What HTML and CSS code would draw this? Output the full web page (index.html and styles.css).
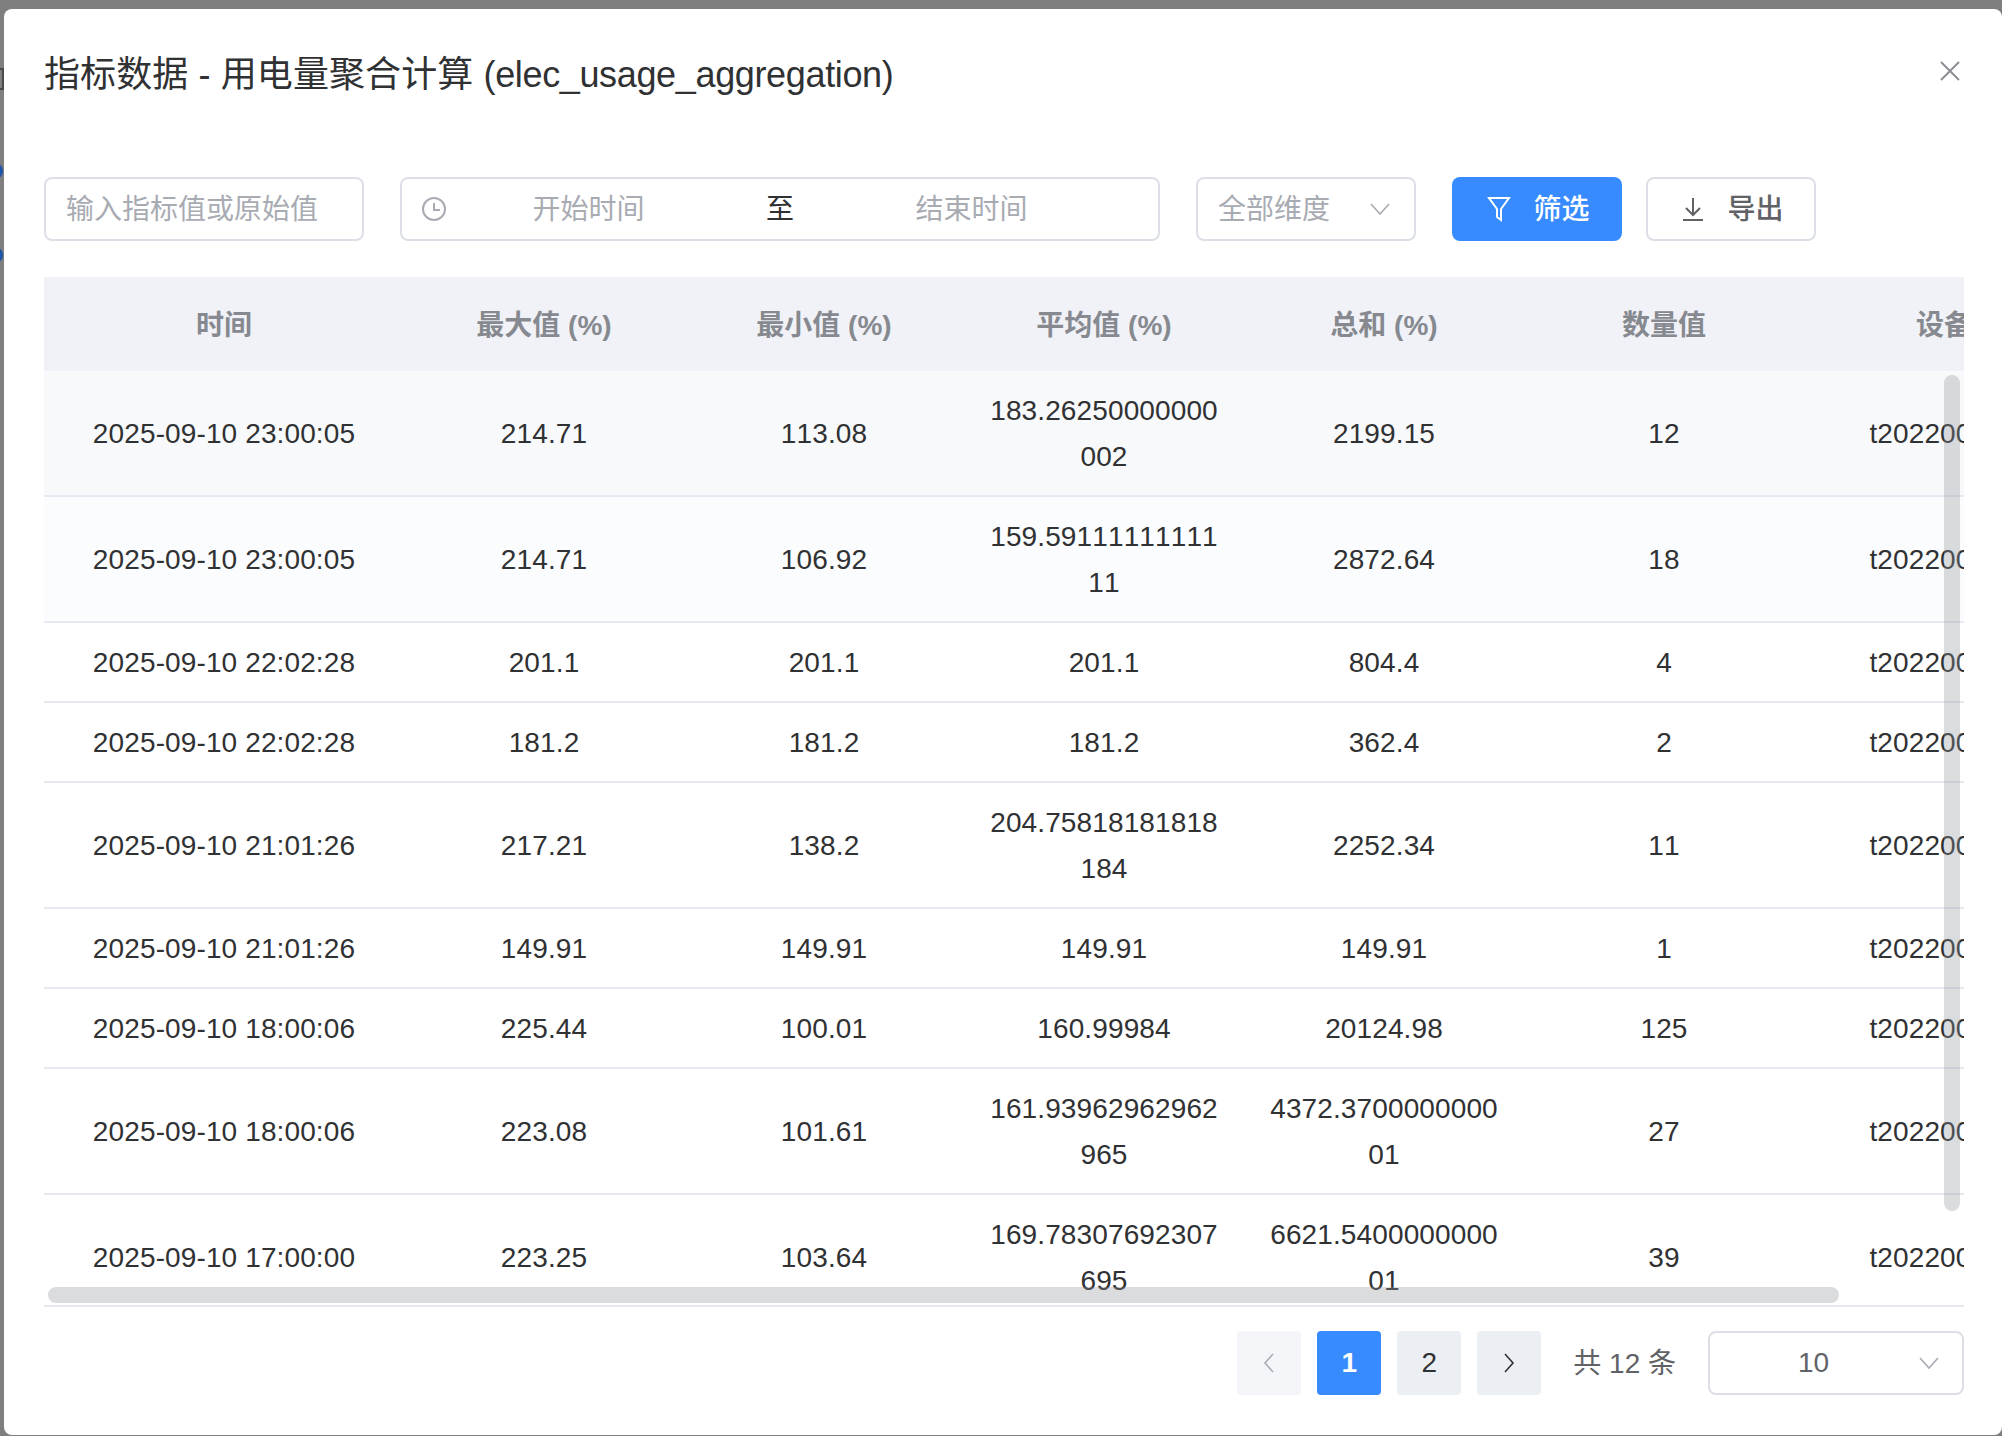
FILE: index.html
```html
<!DOCTYPE html>
<html lang="zh-CN">
<head>
    <meta charset="UTF-8">
    <meta name="viewport" content="width=device-width, initial-scale=1.0">
    <title>指标数据</title>
    <link rel="stylesheet" href="styles.css">
</head>
<body>
    <!-- page behind the dialog, only a sliver shows on the left -->
    <div class="behind-glyph"></div>
    <div class="behind-dot behind-dot-1"></div>
    <div class="behind-dot behind-dot-2"></div>

    <div class="modal">
        <div class="modal-head">
            <h1 class="modal-title">指标数据 - 用电量聚合计算 <span class="title-code">(elec_usage_aggregation)</span></h1>
            <svg class="close-icon" viewBox="0 0 20 20"><path d="M1 1l18 18M19 1L1 19"/></svg>
        </div>

        <div class="toolbar">
            <div class="field field-search"><span class="placeholder">输入指标值或原始值</span></div>

            <div class="field field-date">
                <svg class="clock-icon" viewBox="0 0 26 26"><circle cx="13" cy="13" r="11"/><path d="M13 7v7h6"/></svg>
                <span class="placeholder date-part">开始时间</span>
                <span class="date-sep">至</span>
                <span class="placeholder date-part">结束时间</span>
            </div>

            <div class="field field-select">
                <span class="placeholder select-text">全部维度</span>
                <svg class="chevron" viewBox="0 0 20 12"><path d="M1 1l9 10 9-10"/></svg>
            </div>

            <button class="btn btn-primary">
                <svg class="btn-icon" viewBox="0 0 24 28"><path d="M2 3h20l-8 11v11l-4-3v-8z"/></svg>
                <span class="btn-text">筛选</span>
            </button>
            <button class="btn btn-plain">
                <svg class="btn-icon" viewBox="0 0 24 28"><path d="M12 3v16M5 13l7 7 7-7M2 25h20"/></svg>
                <span class="btn-text">导出</span>
            </button>
        </div>

        <div class="table-wrap">
            <table class="data-table">
                <colgroup>
                    <col class="col-time">
                    <col class="col-num"><col class="col-num"><col class="col-num">
                    <col class="col-num"><col class="col-num"><col class="col-num">
                </colgroup>
                <thead>
                    <tr>
                        <th>时间</th>
                        <th>最大值 (%)</th>
                        <th>最小值 (%)</th>
                        <th>平均值 (%)</th>
                        <th>总和 (%)</th>
                        <th>数量值</th>
                        <th>设备</th>
                    </tr>
                </thead>
                <tbody>
                    <tr class="row-hover">
                        <td>2025-09-10 23:00:05</td><td>214.71</td><td>113.08</td><td>183.26250000000002</td><td>2199.15</td><td>12</td><td>t202200123</td>
                    </tr>
                    <tr class="row-soft">
                        <td>2025-09-10 23:00:05</td><td>214.71</td><td>106.92</td><td>159.5911111111111</td><td>2872.64</td><td>18</td><td>t202200123</td>
                    </tr>
                    <tr>
                        <td>2025-09-10 22:02:28</td><td>201.1</td><td>201.1</td><td>201.1</td><td>804.4</td><td>4</td><td>t202200123</td>
                    </tr>
                    <tr>
                        <td>2025-09-10 22:02:28</td><td>181.2</td><td>181.2</td><td>181.2</td><td>362.4</td><td>2</td><td>t202200123</td>
                    </tr>
                    <tr>
                        <td>2025-09-10 21:01:26</td><td>217.21</td><td>138.2</td><td>204.75818181818184</td><td>2252.34</td><td>11</td><td>t202200123</td>
                    </tr>
                    <tr>
                        <td>2025-09-10 21:01:26</td><td>149.91</td><td>149.91</td><td>149.91</td><td>149.91</td><td>1</td><td>t202200123</td>
                    </tr>
                    <tr>
                        <td>2025-09-10 18:00:06</td><td>225.44</td><td>100.01</td><td>160.99984</td><td>20124.98</td><td>125</td><td>t202200123</td>
                    </tr>
                    <tr>
                        <td>2025-09-10 18:00:06</td><td>223.08</td><td>101.61</td><td>161.93962962962965</td><td>4372.370000000001</td><td>27</td><td>t202200123</td>
                    </tr>
                    <tr>
                        <td>2025-09-10 17:00:00</td><td>223.25</td><td>103.64</td><td>169.78307692307695</td><td>6621.540000000001</td><td>39</td><td>t202200123</td>
                    </tr>
                </tbody>
            </table>
            <div class="thumb thumb-v"></div>
            <div class="thumb thumb-h"></div>
        </div>

        <div class="pager">
            <div class="page-btn page-disabled">
                <svg class="page-arrow" viewBox="0 0 12 20"><path d="M10 1L2 10l8 9"/></svg>
            </div>
            <div class="page-btn page-active">1</div>
            <div class="page-btn">2</div>
            <div class="page-btn">
                <svg class="page-arrow" viewBox="0 0 12 20"><path d="M2 1l8 9-8 9"/></svg>
            </div>
            <span class="page-total">共 12 条</span>
            <div class="field field-size">
                <span class="size-text">10</span>
                <svg class="chevron" viewBox="0 0 20 12"><path d="M1 1l9 10 9-10"/></svg>
            </div>
        </div>
    </div>
</body>
</html>
```

FILE: styles.css
```css
* {
    box-sizing: border-box;
}

html, body {
    height: 100%;
}

body {
    margin: 0;
    padding: 9px 0 0 4px;
    overflow: hidden;
    background-color: #7f7f7f;
    font-family: "Liberation Sans", "Noto Sans CJK SC", sans-serif;
    font-size: 28px;
    font-kerning: none;
    color: #303133;
}

.behind-glyph {
    position: absolute;
    left: -14px;
    top: 68px;
    width: 18px;
    height: 22px;
    border: 2px solid #4a4a4c;
}

.behind-dot {
    position: absolute;
    left: -8px;
    width: 11px;
    height: 14px;
    border-radius: 50%;
    background-color: #1f57a8;
}

.behind-dot-1 {
    top: 164px;
}

.behind-dot-2 {
    top: 248px;
}

.modal {
    position: relative;
    width: 1998px;
    height: 1426px;
    padding: 41px 38px 0 40px;
    background-color: #fff;
    border-radius: 8px;
}

.modal-head {
    display: flex;
    align-items: center;
    justify-content: space-between;
    height: 50px;
}

.modal-title {
    margin: 0;
    font-size: 36px;
    font-weight: 400;
    line-height: 50px;
    letter-spacing: 0.1px;
    color: #303133;
}

.title-code {
    letter-spacing: -0.35px;
}

.close-icon {
    width: 20px;
    height: 20px;
    margin: -8px 4px 0 0;
    fill: none;
    stroke: #8c8e94;
    stroke-width: 2;
}

.toolbar {
    display: flex;
    margin-top: 77px;
    height: 64px;
}

.field {
    display: flex;
    align-items: center;
    height: 64px;
    background-color: #fff;
    border: 2px solid #dcdfe6;
    border-radius: 8px;
}

.placeholder {
    margin-top: -4px;
    color: #a8abb2;
    white-space: nowrap;
}

.field-search {
    width: 320px;
    padding: 0 20px;
}

.field-date {
    width: 760px;
    margin-left: 36px;
    padding-left: 19px;
}

.clock-icon {
    flex: none;
    width: 26px;
    height: 26px;
    fill: none;
    stroke: #a8abb2;
    stroke-width: 2;
}

.date-part {
    width: 283px;
    text-align: center;
}

.date-sep {
    width: 100px;
    margin-top: -4px;
    text-align: center;
    color: #303133;
}

.field-select {
    justify-content: space-between;
    width: 220px;
    margin-left: 36px;
    padding: 0 24px 0 20px;
}

.chevron {
    flex: none;
    width: 20px;
    height: 12px;
    fill: none;
    stroke: #a8abb2;
    stroke-width: 1.6;
}

.btn {
    display: flex;
    align-items: center;
    justify-content: center;
    gap: 22px;
    width: 170px;
    height: 64px;
    padding: 0;
    border-radius: 8px;
    font-family: inherit;
    font-size: 28px;
    font-weight: 500;
}

.btn-text {
    margin-top: -4px;
}

.btn-icon {
    width: 24px;
    height: 28px;
    margin-left: 3px;
    fill: none;
    stroke: currentColor;
    stroke-width: 2;
}

.btn-primary {
    margin-left: 36px;
    border: 0;
    background-color: #378bff;
    color: #fff;
}

.btn-plain {
    margin-left: 24px;
    border: 2px solid #dcdfe6;
    background-color: #fff;
    color: #606266;
}

.table-wrap {
    position: relative;
    height: 1030px;
    margin-top: 36px;
    overflow: hidden;
    border-bottom: 2px solid #e6e9f2;
}

.data-table {
    width: 2040px;
    table-layout: fixed;
    border-collapse: separate;
    border-spacing: 0;
}

.col-time {
    width: 360px;
}

.col-num {
    width: 280px;
}

.data-table th {
    height: 94px;
    padding: 0 24px 2px;
    background-color: #f0f2f7;
    color: #86898f;
    font-weight: 700;
    text-align: center;
    white-space: nowrap;
}

.data-table td {
    padding: 17px 24px 15px;
    border-bottom: 2px solid #e6e9f2;
    line-height: 46px;
    letter-spacing: 0.12px;
    text-align: center;
    word-break: break-all;
}

.row-hover td {
    background-color: #f8f9fb;
}

.row-soft td {
    background-color: #fbfcfd;
}

.thumb {
    position: absolute;
    border-radius: 8px;
    background-color: rgba(144, 147, 153, 0.32);
}

.thumb-v {
    top: 98px;
    right: 4px;
    width: 16px;
    height: 836px;
}

.thumb-h {
    left: 4px;
    bottom: 2px;
    width: 1791px;
    height: 16px;
}

.pager {
    display: flex;
    align-items: center;
    justify-content: flex-end;
    gap: 16px;
    margin-top: 24px;
}

.page-btn {
    display: flex;
    align-items: center;
    justify-content: center;
    width: 64px;
    height: 64px;
    border-radius: 4px;
    background-color: #ebeef3;
    color: #303133;
}

.page-disabled {
    background-color: #f3f5f9;
}

.page-disabled .page-arrow {
    stroke: #a8abb2;
}

.page-active {
    background-color: #378bff;
    color: #fff;
    font-weight: 700;
}

.page-arrow {
    width: 12px;
    height: 20px;
    fill: none;
    stroke: #303133;
    stroke-width: 1.6;
}

.page-total {
    margin: -4px 0 0 16px;
    color: #606266;
    white-space: nowrap;
}

.field-size {
    width: 256px;
    margin-left: 16px;
    padding: 0 23px 0 20px;
}

.size-text {
    flex: 1;
    margin-right: 22px;
    text-align: center;
    color: #606266;
}
```
